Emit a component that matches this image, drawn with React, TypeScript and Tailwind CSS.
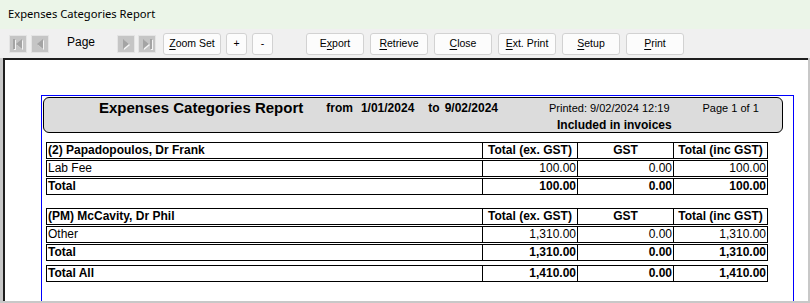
import React from "react";

const NavBtn = ({ kind }: { kind: "first" | "prev" | "next" | "last" }) => {
  const icon = (fill: string, dx: number) => {
    const g: React.ReactNode[] = [];
    if (kind === "first") {
      g.push(<rect key="b" x={3 + dx} y={3 + dx} width={2} height={10} fill={fill} />);
      g.push(<polygon key="t" points={`${12 + dx},${3 + dx} ${12 + dx},${13 + dx} ${6 + dx},${8 + dx}`} fill={fill} />);
    } else if (kind === "prev") {
      g.push(<polygon key="t" points={`${11 + dx},${3 + dx} ${11 + dx},${13 + dx} ${5 + dx},${8 + dx}`} fill={fill} />);
    } else if (kind === "next") {
      g.push(<polygon key="t" points={`${5 + dx},${3 + dx} ${5 + dx},${13 + dx} ${11 + dx},${8 + dx}`} fill={fill} />);
    } else {
      g.push(<polygon key="t" points={`${4 + dx},${3 + dx} ${4 + dx},${13 + dx} ${10 + dx},${8 + dx}`} fill={fill} />);
      g.push(<rect key="b" x={11 + dx} y={3 + dx} width={2} height={10} fill={fill} />);
    }
    return g;
  };
  return (
    <div className="w-[18px] h-[18px] border border-[#e4e4e4] bg-[#c5c5c5] flex items-center justify-center">
      <svg width="16" height="16" viewBox="0 0 16 16">
        {icon("#f4f4f4", 1)}
        {icon("#a4a4a4", 0)}
      </svg>
    </div>
  );
};

const TBtn = ({ children, w = "w-[58px]" }: { children: React.ReactNode; w?: string }) => (
  <div
    className={`${w} h-[22px] rounded-[3px] border border-[#d2d2d2] bg-[#fcfcfc] flex items-center justify-center text-[10.5px] text-black`}
    style={{ fontFamily: '"Liberation Sans", Arial, sans-serif' }}
  >
    {children}
  </div>
);

const U = ({ children }: { children: React.ReactNode }) => (
  <span className="underline underline-offset-[2px]">{children}</span>
);

type RowProps = {
  cells: string[];
  kind: "head" | "data" | "total";
  className?: string;
};

const Row = ({ cells, kind, className = "" }: RowProps) => {
  const bold = kind !== "data";
  return (
    <div
      className={`grid grid-cols-[435px_95px_96px_94px] h-[17px] border border-black text-[12px] leading-[15px] text-black ${bold ? "font-bold" : ""} ${className}`}
    >
      <div className="pl-[1px] whitespace-nowrap overflow-hidden">{cells[0]}</div>
      {cells.slice(1).map((c, i) => (
        <div
          key={i}
          className={`border-l border-black whitespace-nowrap ${kind === "head" ? "text-center" : "text-right pr-[1px]"}`}
        >
          {c}
        </div>
      ))}
    </div>
  );
};

export default function App() {
  return (
    <div className="w-[810px] h-[303px] overflow-hidden bg-[#f0f0f0] flex flex-col">
      {/* title bar */}
      <div
        className="h-[29px] bg-[#ebf5e8] flex items-center pl-[8px] text-[11.2px] text-black"
        style={{ fontFamily: '"Segoe UI", "Noto Sans", sans-serif' }}
      >
        Expenses Categories Report
      </div>
      {/* toolbar */}
      <div className="h-[29px] flex items-center pl-[9px]">
        <div className="flex items-center gap-[4px]">
          <NavBtn kind="first" />
          <NavBtn kind="prev" />
        </div>
        <div
          className="ml-[18px] w-[50px] text-[12px] text-black -mt-[4px]"
          style={{ fontFamily: '"Liberation Sans", Arial, sans-serif' }}
        >
          Page
        </div>
        <div className="flex items-center gap-[3px]">
          <NavBtn kind="next" />
          <NavBtn kind="last" />
        </div>
        <div className="ml-[7px] flex items-center gap-[5px]">
          <TBtn>
            <U>Z</U>oom Set
          </TBtn>
          <TBtn w="w-[21px]">+</TBtn>
          <TBtn w="w-[21px]">-</TBtn>
        </div>
        <div className="ml-[33px] flex items-center gap-[6px]">
          <TBtn>
            E<U>x</U>port
          </TBtn>
          <TBtn>
            <U>R</U>etrieve
          </TBtn>
          <TBtn>
            <U>C</U>lose
          </TBtn>
          <TBtn>
            <U>E</U>xt. Print
          </TBtn>
          <TBtn>
            <U>S</U>etup
          </TBtn>
          <TBtn>
            <U>P</U>rint
          </TBtn>
        </div>
      </div>
      {/* content */}
      <div className="h-[245px] bg-[#c8c8c8] pl-[3px] pr-[2px] pb-[2px] flex">
        <div className="flex-1 bg-white border-t-2 border-l-2 border-[#1e1e1e] overflow-hidden">
          <div
            className="ml-[36px] mt-[35px] w-[753px] h-[300px] border border-[#0000ff] text-black"
            style={{ fontFamily: '"Liberation Sans", Arial, sans-serif' }}
          >
            {/* header box */}
            <div className="ml-[1px] mt-[1px] w-[740px] h-[36px] rounded-[6px] border border-black bg-[#dcdcdc] flex flex-col">
              <div className="h-[19px] pt-[1px] flex items-center whitespace-pre">
                <span className="ml-[55px] text-[15px] font-bold leading-[18px]">Expenses Categories Report</span>
                <span className="ml-[23px] text-[12px] font-bold">from</span>
                <span className="ml-[8px] text-[12px] font-bold">1/01/2024</span>
                <span className="ml-[14px] text-[12px] font-bold">to</span>
                <span className="ml-[5px] text-[12px] font-bold">9/02/2024</span>
                <span className="ml-[51px] text-[11px]">Printed: 9/02/2024 12:19</span>
                <span className="ml-[33px] text-[11px]">Page 1 of 1</span>
              </div>
              <div className="h-[15px] flex items-center">
                <span className="ml-[513px] text-[12px] font-bold">Included in invoices</span>
              </div>
            </div>
            {/* tables */}
            <div className="ml-[4px] mt-[9px] w-[722px] flex flex-col">
              <Row kind="head" cells={["(2) Papadopoulos, Dr Frank", "Total (ex. GST)", "GST", "Total (inc GST)"]} />
              <Row kind="data" className="mt-[1px]" cells={["Lab Fee", "100.00", "0.00", "100.00"]} />
              <Row kind="total" className="mt-[1px]" cells={["Total", "100.00", "0.00", "100.00"]} />

              <Row kind="head" className="mt-[13px]" cells={["(PM) McCavity, Dr Phil", "Total (ex. GST)", "GST", "Total (inc GST)"]} />
              <Row kind="data" className="mt-[1px]" cells={["Other", "1,310.00", "0.00", "1,310.00"]} />
              <Row kind="total" className="mt-[1px]" cells={["Total", "1,310.00", "0.00", "1,310.00"]} />
              <Row kind="total" className="mt-[4px]" cells={["Total All", "1,410.00", "0.00", "1,410.00"]} />
            </div>
          </div>
        </div>
      </div>
    </div>
  );
}
